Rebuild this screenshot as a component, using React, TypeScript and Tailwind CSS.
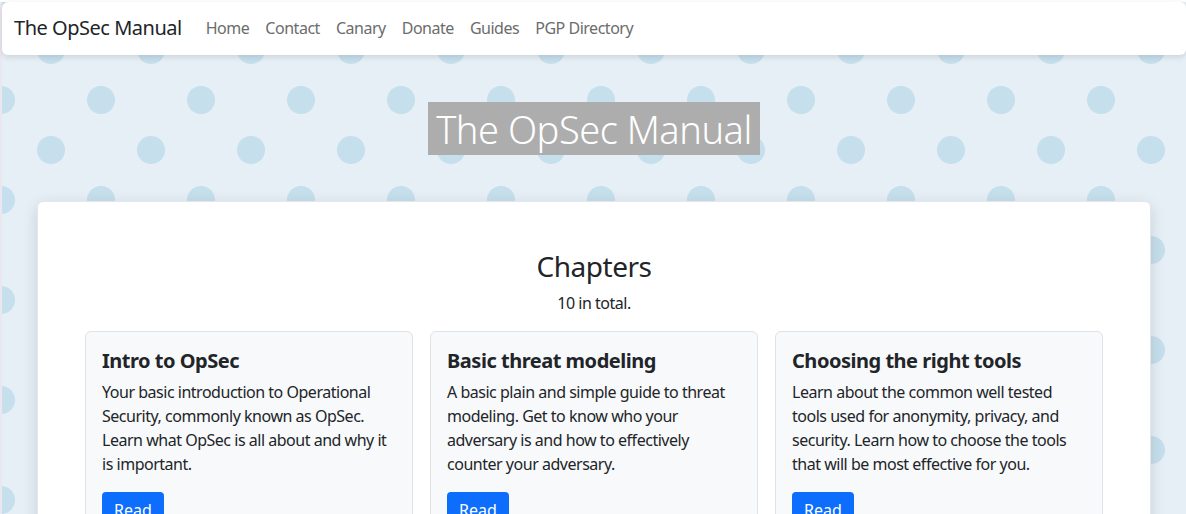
import React from 'react';

const chapters = [
	{
		title: 'Intro to OpSec',
		text: 'Your basic introduction to Operational Security, commonly known as OpSec. Learn what OpSec is all about and why it is important.',
	},
	{
		title: 'Basic threat modeling',
		text: 'A basic plain and simple guide to threat modeling. Get to know who your adversary is and how to effectively counter your adversary.',
	},
	{
		title: 'Choosing the right tools',
		text: 'Learn about the common well tested tools used for anonymity, privacy, and security. Learn how to choose the tools that will be most effective for you.',
	},
];

const links = ['Home', 'Contact', 'Canary', 'Donate', 'Guides', 'PGP Directory'];

const App = () => {
	return (
		<div
			className="min-h-screen border-l-2 border-[#ebe7f1] text-[#212529] tracking-[-0.03em] font-['Noto_Sans',sans-serif] bg-[#e6eff6] bg-[radial-gradient(circle,#c6dfec_13.5px,transparent_14.5px),radial-gradient(circle,#c6dfec_13.5px,transparent_14.5px)] bg-[length:100px_100px] bg-[position:49px_48px,-1px_-2px]"
		>
			<nav className="relative z-10 flex items-center h-[53px] mt-[2px] bg-white rounded-md shadow-[0_2px_6px_rgba(0,0,0,0.12)]">
				<a className="ml-[12px] mr-[16px] text-[20px] text-[#212529] -mt-[2px]">The OpSec Manual</a>
				<ul className="flex -mt-[2px]">
					{links.map((l) => (
						<li key={l}>
							<a className="block px-[8px] text-[16px] text-[#6c6c6c]">{l}</a>
						</li>
					))}
				</ul>
			</nav>

			<div className="flex justify-center pt-[47px] pb-[46px]">
				<h1 className="h-[53px] px-[8px] flex items-center bg-[#adadad] text-white text-[38px] font-light leading-none">
					The OpSec Manual
				</h1>
			</div>

			<div className="mx-[35px] bg-white rounded-md border border-[#e3e6ea] shadow-[0_4px_16px_rgba(0,0,0,0.12)] px-[47px] pt-[48px] pb-[40px]">
				<h2 className="text-center text-[28px] leading-[1.2]">Chapters</h2>
				<p className="text-center text-[16px] mt-[7px] mb-[16px]">10 in total.</p>
				<div className="grid grid-cols-3 gap-[17px]">
					{chapters.map((c) => (
						<div
							key={c.title}
							className="bg-[#f8f9fa] border border-[#dfe2e6] rounded-md pt-[17px] px-[16px] pb-[16px]"
						>
							<h5 className="text-[20px] font-bold leading-[1.2] mb-[7px]">{c.title}</h5>
							<p className="text-[16px] leading-[24px] mb-[16px]">{c.text}</p>
							<button className="bg-[#0d6efd] text-white text-[16px] tracking-normal rounded-[4px] px-[12px] py-[6px]">
								Read
							</button>
						</div>
					))}
				</div>
			</div>
		</div>
	);
};

export default App;
